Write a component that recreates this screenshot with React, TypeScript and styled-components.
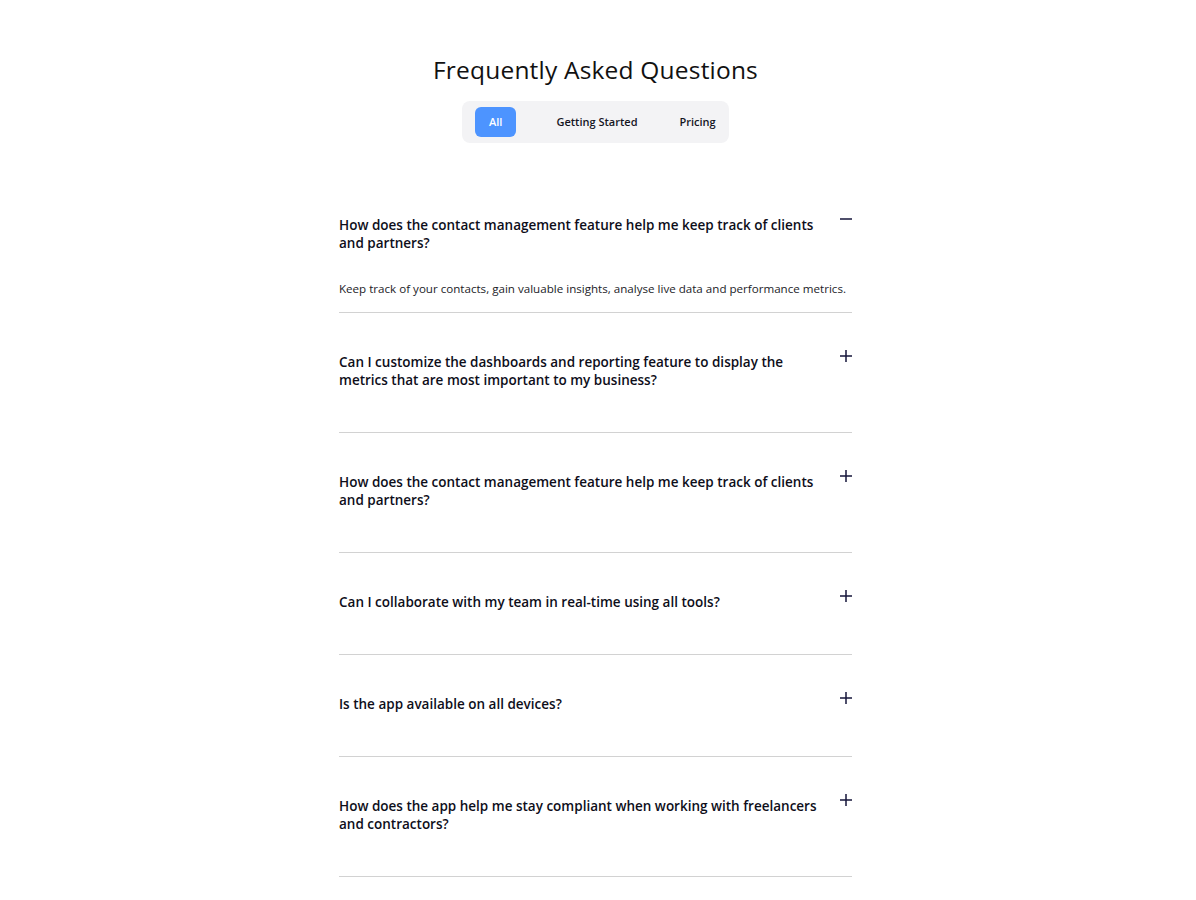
import React, { useState } from 'react';
import styled, { createGlobalStyle } from 'styled-components';

const GlobalStyle = createGlobalStyle`
  body {
    margin: 0;
    background: #ffffff;
    font-family: 'Open Sans', 'Noto Sans', sans-serif;
    color: #0e0e1a;
  }
`;

const Page = styled.div`
  display: flex;
  flex-direction: column;
  align-items: center;
  padding: 54px 5px 0 0;
`;

const Title = styled.h1`
  margin: 0;
  font-size: 24.5px;
  line-height: 32px;
  font-weight: 400;
  color: #111111;
  letter-spacing: 0.2px;
`;

const Tabs = styled.div`
  display: flex;
  align-items: center;
  box-sizing: border-box;
  width: 267px;
  height: 42px;
  margin-top: 15px;
  padding: 6px 0 6px 13px;
  background: #f3f3f5;
  border-radius: 8px;
`;

const Tab = styled.button<{ $active?: boolean }>`
  flex-shrink: 0;
  white-space: nowrap;
  height: 30px;
  padding: 0 14px 2px;
  margin-right: ${(p) => (p.$active ? '26px' : '14px')};
  border: none;
  border-radius: 6px;
  font-family: inherit;
  font-size: 11px;
  font-weight: 600;
  cursor: pointer;
  background: ${(p) => (p.$active ? '#4d94ff' : 'transparent')};
  color: ${(p) => (p.$active ? '#ffffff' : '#15151f')};

  &:last-child {
    margin-right: 0;
  }
`;

const List = styled.div`
  width: 513px;
  margin-top: 33px;
`;

const Item = styled.div<{ $open?: boolean }>`
  padding: 36px 0 ${(p) => (p.$open ? '15px' : '43px')};
  border-bottom: 1px solid #d2d2d2;
`;

const Header = styled.div`
  display: flex;
  justify-content: space-between;
  align-items: flex-start;
  cursor: pointer;
`;

const Question = styled.div`
  flex: 1;
  padding: 4px 18px 0 0;
  font-size: 13.5px;
  line-height: 18px;
  font-weight: 600;
  color: #0e0e1a;
`;

const Icon = styled.svg`
  flex-shrink: 0;
  display: block;
  margin-top: 1px;
`;

const Answer = styled.p`
  margin: 29px 0 0;
  font-size: 11.6px;
  line-height: 16px;
  color: #1c1c28;
`;

const faqs = [
  {
    q: 'How does the contact management feature help me keep track of clients and partners?',
    a: 'Keep track of your contacts, gain valuable insights, analyse live data and performance metrics.',
  },
  {
    q: 'Can I customize the dashboards and reporting feature to display the metrics that are most important to my business?',
    a: 'Yes, dashboards and reports can be tailored to the metrics you care about.',
  },
  {
    q: 'How does the contact management feature help me keep track of clients and partners?',
    a: 'Keep track of your contacts, gain valuable insights, analyse live data and performance metrics.',
  },
  {
    q: 'Can I collaborate with my team in real-time using all tools?',
    a: 'Yes, every tool supports real-time collaboration.',
  },
  {
    q: 'Is the app available on all devices?',
    a: 'Yes, it works on desktop, tablet and mobile.',
  },
  {
    q: 'How does the app help me stay compliant when working with freelancers and contractors?',
    a: 'Contracts, documents and payments are kept compliant automatically.',
  },
];

const ToggleIcon = ({ open }: { open: boolean }) => (
  <Icon width="12" height="12" viewBox="0 0 12 12" fill="none">
    <path d="M0 6h12" stroke="#14143a" strokeWidth="1.5" />
    {!open && <path d="M6 0v12" stroke="#14143a" strokeWidth="1.5" />}
  </Icon>
);

const App = () => {
  const [tab, setTab] = useState('All');
  const [open, setOpen] = useState<number | null>(0);

  return (
    <Page>
      <GlobalStyle />
      <Title>Frequently Asked Questions</Title>
      <Tabs>
        {['All', 'Getting Started', 'Pricing'].map((t) => (
          <Tab key={t} $active={tab === t} onClick={() => setTab(t)}>
            {t}
          </Tab>
        ))}
      </Tabs>
      <List>
        {faqs.map((f, i) => (
          <Item key={i} $open={open === i}>
            <Header onClick={() => setOpen(open === i ? null : i)}>
              <Question>{f.q}</Question>
              <ToggleIcon open={open === i} />
            </Header>
            {open === i && <Answer>{f.a}</Answer>}
          </Item>
        ))}
      </List>
    </Page>
  );
};

export default App;
